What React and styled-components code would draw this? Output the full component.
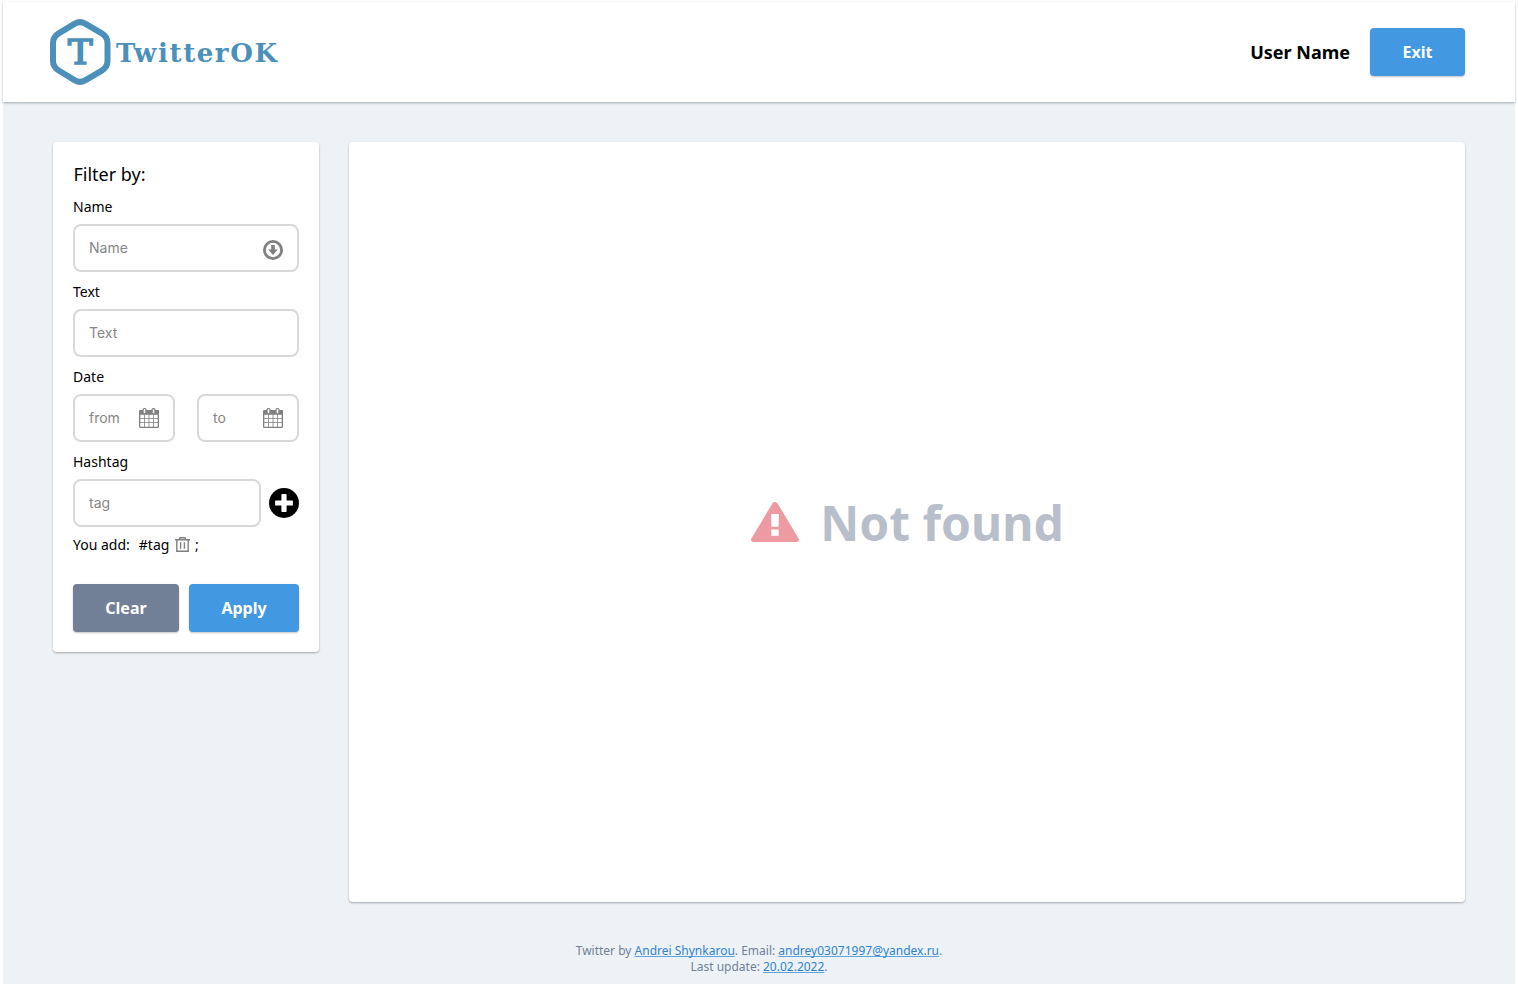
import React from 'react';
import styled, { createGlobalStyle, css } from 'styled-components';

const GlobalStyle = createGlobalStyle`
  *, *::before, *::after { box-sizing: border-box; }
  body {
    margin: 0;
    background: #fff;
    font-family: 'Noto Sans', sans-serif;
    color: #000;
  }
`;

const elevation = css`
  box-shadow: 0 1px 2px rgba(0, 0, 0, 0.24), 0 1px 3px rgba(0, 0, 0, 0.08);
`;

const Frame = styled.div`
  margin: 2px 3px 0;
  height: 982px;
  background: #edf2f7;
  display: flex;
  flex-direction: column;
`;

const Header = styled.header`
  ${elevation}
  height: 100px;
  flex: none;
  background: #fff;
  display: flex;
  align-items: center;
  justify-content: space-between;
  padding: 0 50px 0 47px;
`;

const LogoSvg = styled.svg`
  display: block;
  fill: #4a90ba;
  stroke: #4a90ba;
  font-family: 'DejaVu Serif', serif;
  font-weight: 400;
`;

const Wordmark = styled.text`
  font-size: 26px;
  font-weight: 700;
  stroke: none;
`;

const Account = styled.div`
  display: flex;
  align-items: center;
  gap: 20px;
`;

const UserName = styled.span`
  font-size: 18px;
  line-height: 24px;
  font-weight: 700;
`;

const Button = styled.button`
  width: ${(p) => p.$width}px;
  height: 48px;
  border: 0;
  border-radius: 4px;
  padding: 0;
  background: ${(p) => (p.$muted ? '#718096' : '#4299e1')};
  color: #fff;
  font: 700 16px/24px 'Noto Sans', sans-serif;
  box-shadow: 0 1px 2px rgba(0, 0, 0, 0.24);
`;

const Content = styled.main`
  display: flex;
  align-items: flex-start;
  gap: 30px;
  padding: 40px 50px 0;
`;

const Card = styled.section`
  ${elevation}
  background: #fff;
  border-radius: 4px;
`;

const FilterCard = styled(Card)`
  width: 266px;
  height: 510px;
  flex: none;
  padding: 20px;
  display: flex;
  flex-direction: column;
`;

const Title = styled.h2`
  margin: 0 0 7px;
  padding-left: 0.4px;
  font-size: 18px;
  line-height: 25px;
  font-weight: 400;
`;

const Field = styled.div`
  height: 85px;
`;

const Label = styled.label`
  display: block;
  font-size: 14px;
  line-height: 20px;
  height: 30px;
  padding-top: 3px;
`;

const FieldRow = styled.div`
  display: flex;
  align-items: center;
  justify-content: space-between;
`;

const InputBox = styled.div`
  width: ${(p) => p.$width}px;
  height: 48px;
  border: 2px solid #d9d9d9;
  border-radius: 8px;
  padding: 0 14px;
  display: flex;
  align-items: center;
  justify-content: space-between;
  svg { flex: none; }
`;

const Placeholder = styled.span`
  font-family: Inter, sans-serif;
  font-size: 14px;
  line-height: 20px;
  color: #868686;
`;

const Tags = styled.div`
  display: flex;
  align-items: center;
  height: 20px;
  margin-top: 1px;
  font-size: 14px;
  line-height: 20px;
`;

const TagName = styled.span`
  margin: 0 6px 0 9px;
`;

const Separator = styled.span`
  margin-left: 4.5px;
`;

const Actions = styled.div`
  display: flex;
  gap: 10px;
  margin-top: auto;
`;

const ResultCard = styled(Card)`
  flex: 1;
  height: 760px;
  display: flex;
  align-items: center;
  justify-content: center;
  gap: 21px;
  padding-left: 1px;
`;

const NotFound = styled.p`
  margin: 0;
  padding-top: 1px;
  font-size: 48px;
  line-height: 65px;
  font-weight: 700;
  color: #b8bfcb;
`;

const Footer = styled.footer`
  margin-top: 41px;
  text-align: center;
  font-size: 12px;
  line-height: 16px;
  color: #718096;
`;

const Link = styled.a`
  color: #3182ce;
  text-decoration: underline;
  text-decoration-color: #5fa3de;
  text-decoration-thickness: 1px;
  text-underline-offset: 1px;
  text-decoration-skip-ink: none;
`;

const Logo = () => (
  <LogoSvg width="230" height="68" viewBox="0 0 230 68">
    <path
      d="M24.9 5.6 Q30 2.6 35.1 5.6 L51.4 15.2 Q57.5 18.8 57.5 25 V43 Q57.5 49.2 51.4 52.8 L35.1 62.4 Q30 65.4 24.9 62.4 L9.1 52.8 Q3 49.2 3 43 V25 Q3 18.8 9.1 15.2 Z"
      fill="none"
      strokeWidth="6"
    />
    <text x="18" y="46.3" fontSize="34" textLength="24.6" lengthAdjust="spacingAndGlyphs" strokeWidth="1.7">T</text>
    <Wordmark x="66" y="44" textLength="161" lengthAdjust="spacing">TwitterOK</Wordmark>
  </LogoSvg>
);

const ArrowDownSvg = styled.svg`
  margin-top: 4px;
`;

const ArrowDownIcon = () => (
  <ArrowDownSvg width="20" height="20" viewBox="0 0 20 20">
    <circle cx="10" cy="10" r="8.6" fill="none" stroke="#808080" strokeWidth="2.8" />
    <path d="M8.2 5h3.6v4.6h3L10 15 5.2 9.6h3z" fill="#808080" />
  </ArrowDownSvg>
);

const CalendarIcon = () => (
  <svg width="20" height="20" viewBox="0 0 20 20">
    <path
      fillRule="evenodd"
      fill="#808080"
      d="M1.2 2H3.4V1.8a1.8 1.8 0 0 1 1.8-1.8h.6a1.8 1.8 0 0 1 1.8 1.8V2h4.8V1.8a1.8 1.8 0 0 1 1.8-1.8h.6a1.8 1.8 0 0 1 1.8 1.8V2h2.8A1.2 1.2 0 0 1 20 3.2V18.8A1.2 1.2 0 0 1 18.8 20H1.2A1.2 1.2 0 0 1 0 18.8V3.2A1.2 1.2 0 0 1 1.2 2zM4.7 1.8V4.4a.8.8 0 0 0 1.6 0V1.8a.8.8 0 0 0-1.6 0zM13.7 1.8V4.4a.8.8 0 0 0 1.6 0V1.8a.8.8 0 0 0-1.6 0zM1.3 6.8V10H5V6.8zM5.8 6.8V10H9.6V6.8zM10.4 6.8V10H14.2V6.8zM15 6.8V10H18.7V6.8zM1.3 10.8V14.3H5V10.8zM5.8 10.8V14.3H9.6V10.8zM10.4 10.8V14.3H14.2V10.8zM15 10.8V14.3H18.7V10.8zM1.3 15.1V18.7H5V15.1zM5.8 15.1V18.7H9.6V15.1zM10.4 15.1V18.7H14.2V15.1zM15 15.1V18.7H18.7V15.1z"
    />
  </svg>
);

const PlusIcon = () => (
  <svg width="30" height="30" viewBox="0 0 30 30">
    <circle cx="15" cy="15" r="15" />
    <path
      d="M13.1 6.1h3.8a.7.7 0 0 1 .7.7v5.6h5.6a.7.7 0 0 1 .7.7v3.8a.7.7 0 0 1-.7.7h-5.6v5.6a.7.7 0 0 1-.7.7h-3.8a.7.7 0 0 1-.7-.7v-5.6H6.8a.7.7 0 0 1-.7-.7v-3.8a.7.7 0 0 1 .7-.7h5.6V6.8a.7.7 0 0 1 .7-.7z"
      fill="#fff"
    />
  </svg>
);

const TrashSvg = styled.svg`
  margin-bottom: 1px;
`;

const TrashIcon = () => (
  <TrashSvg width="15" height="15" viewBox="0 0 15 15" fill="none" stroke="#808080" strokeWidth="1.4">
    <path d="M0 2.8H15M4.2 2.8L5 .8H10L10.8 2.8M1.8 2.8V14.2H13.2V2.8M5.6 5.3V11.8M9.4 5.3V11.8" />
  </TrashSvg>
);

const WarningIcon = () => (
  <svg width="48" height="40" viewBox="0 0 48 40">
    <path
      fill="#ed9aa2"
      fillRule="evenodd"
      d="M21.4 1.4C22.5-.5 25.5-.5 26.6 1.4L47.6 36.4C48.6 38.1 47.6 40 45.6 40H2.4C.4 40-.6 38.1.4 36.4zM20.1 12L20.4 24.7H27.6L27.9 12zM20.3 27.4V33.7H27.7V27.4z"
    />
  </svg>
);

const InputField = ({ label, placeholder, icon }) => (
  <Field>
    <Label>{label}</Label>
    <InputBox $width={226}>
      <Placeholder>{placeholder}</Placeholder>
      {icon}
    </InputBox>
  </Field>
);

export default function App() {
  return (
    <>
      <GlobalStyle />
      <Frame>
        <Header>
          <Logo />
          <Account>
            <UserName>User Name</UserName>
            <Button $width={95}>Exit</Button>
          </Account>
        </Header>
        <Content>
          <FilterCard>
            <Title>Filter by:</Title>
            <InputField label="Name" placeholder="Name" icon={<ArrowDownIcon />} />
            <InputField label="Text" placeholder="Text" />
            <Field>
              <Label>Date</Label>
              <FieldRow>
                <InputBox $width={102}>
                  <Placeholder>from</Placeholder>
                  <CalendarIcon />
                </InputBox>
                <InputBox $width={102}>
                  <Placeholder>to</Placeholder>
                  <CalendarIcon />
                </InputBox>
              </FieldRow>
            </Field>
            <Field>
              <Label>Hashtag</Label>
              <FieldRow>
                <InputBox $width={188}>
                  <Placeholder>tag</Placeholder>
                </InputBox>
                <PlusIcon />
              </FieldRow>
            </Field>
            <Tags>
              <span>You add:</span>
              <TagName>#tag</TagName>
              <TrashIcon />
              <Separator>;</Separator>
            </Tags>
            <Actions>
              <Button $width={106} $muted>Clear</Button>
              <Button $width={110}>Apply</Button>
            </Actions>
          </FilterCard>
          <ResultCard>
            <WarningIcon />
            <NotFound>Not found</NotFound>
          </ResultCard>
        </Content>
        <Footer>
          Twitter by <Link>Andrei Shynkarou</Link>. Email: <Link>andrey03071997@yandex.ru</Link>.
          <br />
          Last update: <Link>20.02.2022</Link>.
        </Footer>
      </Frame>
    </>
  );
}
